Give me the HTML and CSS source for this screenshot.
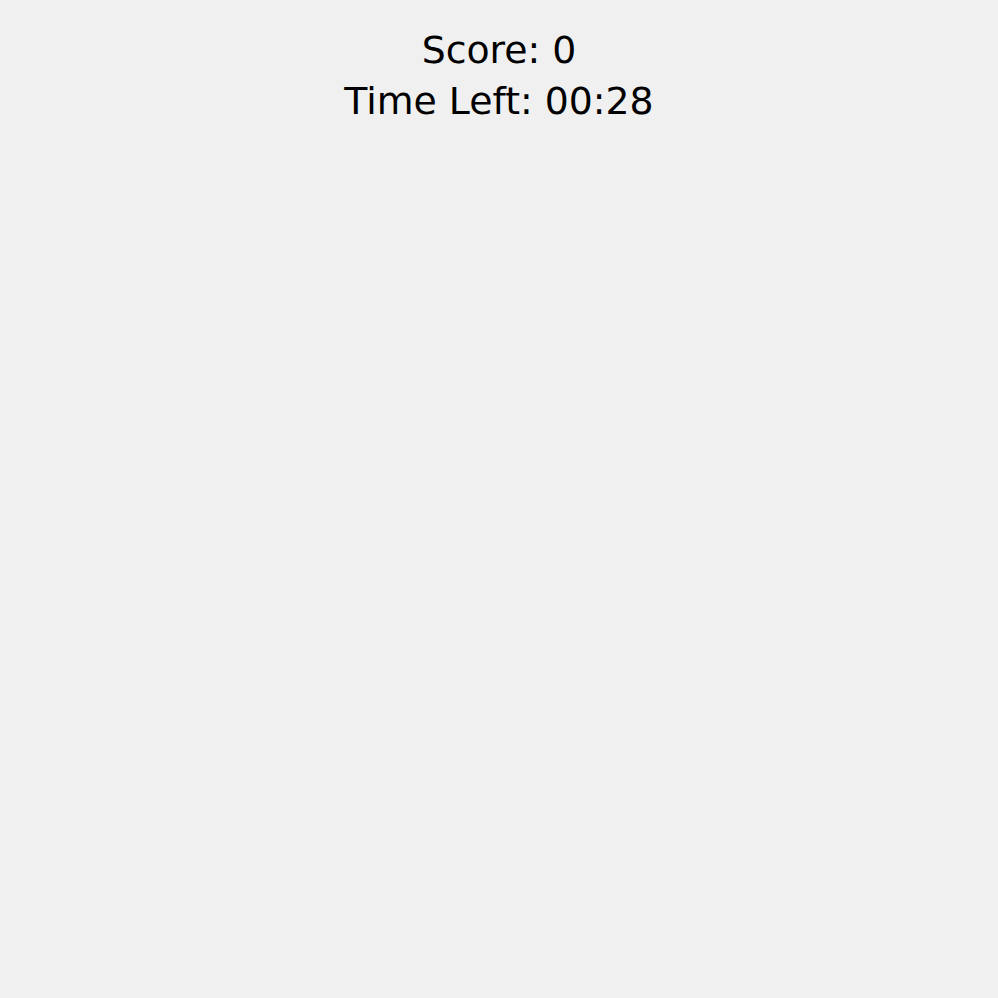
FILE: index.html
```html
<!DOCTYPE html>
<html>
<head>
<meta charset="utf-8">
<link rel="stylesheet" href="styles.css">
</head>
<body>
<div class="hud">
  <div class="score">Score: 0</div>
  <div class="timer">Time Left: 00:28</div>
</div>
</body>
</html>
```

FILE: styles.css
```css
html, body {
  margin: 0;
  height: 100%;
  background: #f0f0f0;
}
body {
  font-family: "DejaVu Sans", sans-serif;
  color: #000;
}
.hud {
  display: flex;
  flex-direction: column;
  align-items: center;
  padding-top: 25px;
  font-size: 37.8px;
  line-height: 51px;
}
```
